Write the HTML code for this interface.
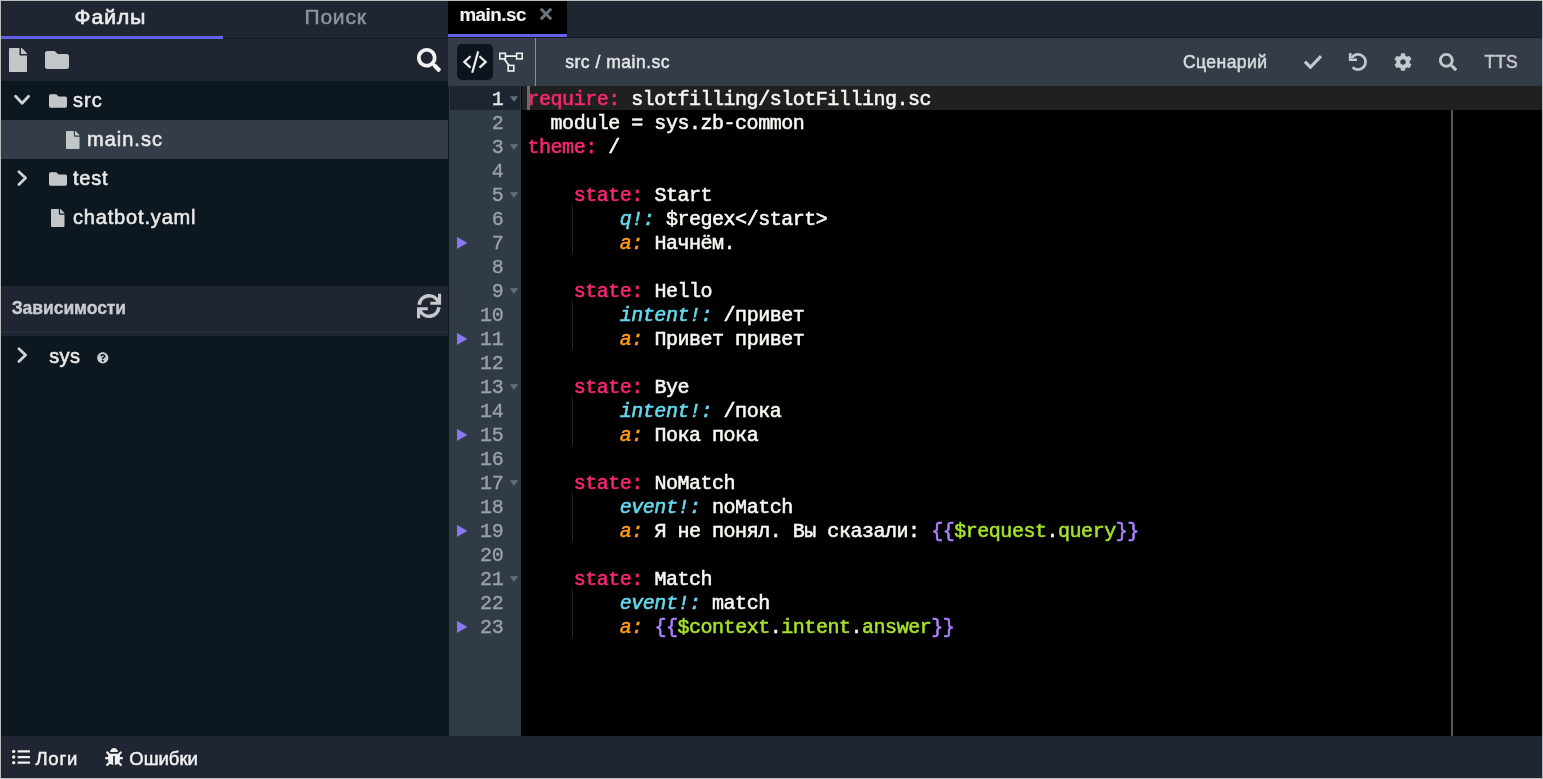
<!DOCTYPE html>
<html lang="ru">
<head>
<meta charset="utf-8">
<title>main.sc</title>
<style>
*{box-sizing:border-box;margin:0;padding:0}
html,body{width:1543px;height:779px;overflow:hidden;background:#bcbcbc}
body{font-family:"Liberation Sans",sans-serif;color:#e9e9e9;position:relative}
.abs{position:absolute}
.t{position:absolute;white-space:nowrap;line-height:1;-webkit-text-stroke:0.3px}
svg{position:absolute;overflow:visible}
/* sidebar */
#side{left:1px;top:1px;width:447px;height:735px;background:#0d1720}
#stabs{left:1px;top:1px;width:447px;height:38px;background:#1f2632}
#stabline{left:223px;top:37.5px;width:225px;height:1.5px;background:#141b24}
#sactive{left:1px;top:36px;width:222px;height:3px;background:#6461e9}
#stool{left:1px;top:39px;width:447px;height:42px;background:#1f2632}
#selrow{left:1px;top:120px;width:447px;height:39px;background:#333c47}
#deph{left:1px;top:286px;width:447px;height:50px;background:#1f2632}
#deps{left:1px;top:331px;width:447px;height:2px;background:linear-gradient(#27333b,#222c36)}
#divider{left:448px;top:86px;width:1px;height:650px;background:#0d1720}
/* editor */
#etabs{left:448px;top:1px;width:1094px;height:37px;background:#1f2632}
#etabline{left:448px;top:37px;width:1094px;height:1px;background:#151c25}
#etab{left:448px;top:1px;width:119px;height:33px;background:#000}
#etabul{left:448px;top:34px;width:119px;height:3px;background:#6461e9}
#etool{left:448px;top:38px;width:1094px;height:48px;background:#333c47}
#btncode{left:457px;top:44px;width:36px;height:36px;border-radius:5px;background:#0c151e}
#vsep{left:535px;top:38px;width:1px;height:48px;background:#8a9097}
#gutter{left:448.8px;top:86px;width:72.6px;height:650px;background:#313b46}
#gact{left:450px;top:86px;width:70px;height:24px;background:#1d2530}
#code{left:521px;top:86px;width:1021px;height:650px;background:#000}
#lact{left:522px;top:86px;width:1020px;height:24px;background:#202020}
#cursor{left:527px;top:86px;width:2.6px;height:24px;background:#6a6a6a}
#pm{left:1451px;top:110px;width:2px;height:626px;background:#555651}
#bottom{left:1px;top:736px;width:1541px;height:42px;background:#1f2632}
/* code text */
.ln,.cl{position:absolute;font-family:"Liberation Mono",monospace;font-size:20px;letter-spacing:-0.47px;line-height:24px;height:24px;white-space:pre;margin-top:2px;-webkit-text-stroke:0.55px}
.ln{left:450px;width:53.2px;text-align:right;color:#9ba0a7;-webkit-text-stroke:0.35px}
.cl{left:527.5px;color:#f8f8f2}
.k{color:#f92672}.c{color:#66d9ef;font-style:italic}.o{color:#fd971f;font-style:italic}
.p{color:#ae81ff}.g{color:#a6e22e}
.ig{position:absolute;width:1px;background-image:linear-gradient(#45443a 50%,transparent 50%);background-size:1px 2px}
</style>
</head>
<body>
<div id="wrap" style="position:absolute;left:0;top:0;width:1543px;height:779px;will-change:transform">
<!-- SIDEBAR -->
<div class="abs" id="side"></div>
<div class="abs" id="stabs"></div>
<div class="abs" id="stabline"></div>
<div class="abs" id="sactive"></div>
<div class="abs" id="stool"></div>
<div class="abs" id="selrow"></div>
<div class="abs" id="deph"></div>
<div class="abs" id="deps"></div>
<!-- EDITOR -->
<div class="abs" id="etabs"></div>
<div class="abs" id="etabline"></div>
<div class="abs" id="etab"></div>
<div class="abs" id="etabul"></div>
<div class="abs" id="etool"></div>
<div class="abs" id="divider"></div>
<div class="abs" id="btncode"></div>
<div class="abs" id="vsep"></div>
<div class="abs" id="gutter"></div>
<div class="abs" id="gact"></div>
<div class="abs" id="code"></div>
<div class="abs" id="lact"></div>
<div class="abs" id="pm"></div>
<div class="abs" id="cursor"></div>
<div class="abs" id="bottom"></div>
<!--TEXT-->
<div class="t" id="t1" style="left:74.5px;top:6px;font-size:21px;letter-spacing:1px;color:#ececec;-webkit-text-stroke:0.65px">Файлы</div>
<div class="t" id="t2" style="left:304.5px;top:6px;font-size:21px;letter-spacing:0.8px;color:#8f949b;-webkit-text-stroke:0.5px">Поиск</div>
<div class="t" id="t3" style="left:73px;top:90px;font-size:20px;letter-spacing:1px;-webkit-text-stroke:0.55px">src</div>
<div class="t" id="t4" style="left:87px;top:129px;font-size:20px;letter-spacing:1px;-webkit-text-stroke:0.55px">main.sc</div>
<div class="t" id="t5" style="left:73px;top:168px;font-size:20px;letter-spacing:0.8px;-webkit-text-stroke:0.55px">test</div>
<div class="t" id="t6" style="left:73px;top:207px;font-size:20px;letter-spacing:0.83px;-webkit-text-stroke:0.55px">chatbot.yaml</div>
<div class="t" id="t7" style="left:11.7px;top:300px;font-size:17.5px;font-weight:bold;letter-spacing:-0.05px;color:#c9ccd0;-webkit-text-stroke:0.35px">Зависимости</div>
<div class="t" id="t8" style="left:49.3px;top:346px;font-size:20px;letter-spacing:0.3px;-webkit-text-stroke:0.55px">sys</div>
<div class="t" id="t9" style="left:459.4px;top:6px;font-size:18.75px;font-weight:bold;letter-spacing:-0.45px;color:#f2f2f2;-webkit-text-stroke:0.1px">main.sc</div>
<div class="t" id="t10" style="left:565.3px;top:54px;font-size:17.5px;letter-spacing:0.5px;color:#e4e5e7;-webkit-text-stroke:0.5px">src / main.sc</div>
<div class="t" id="t11" style="left:1183px;top:54px;font-size:17.5px;letter-spacing:0.45px;color:#d9dbde;-webkit-text-stroke:0.5px">Сценарий</div>
<div class="t" id="t12" style="left:1484.5px;top:53.5px;font-size:17.5px;color:#c6c9cd;-webkit-text-stroke:0.5px">TTS</div>
<div class="t" id="t13" style="left:35.4px;top:750px;font-size:18.5px;letter-spacing:0.8px;color:#f0f0f0;-webkit-text-stroke:0.5px">Логи</div>
<div class="t" id="t14" style="left:129.3px;top:750px;font-size:18.5px;color:#f0f0f0;-webkit-text-stroke:0.5px">Ошибки</div>
<!--ICONS-->
<svg id="i1" style="left:9px;top:48px" width="18" height="24" viewBox="0 0 384 512"><path d="M224 136V0H24C10.7 0 0 10.7 0 24v464c0 13.3 10.7 24 24 24h336c13.3 0 24-10.7 24-24V160H248c-13.2 0-24-10.8-24-24zm160-14.1v6.1H256V0h6.1c6.4 0 12.5 2.5 17 7l97.9 98c4.5 4.5 7 10.6 7 16.9z" fill="#c3c6c9"/></svg>
<svg id="i2" style="left:45px;top:48px" width="24" height="24" viewBox="0 0 512 512"><path d="M464 128H272l-64-64H48C21.49 64 0 85.49 0 112v288c0 26.51 21.49 48 48 48h416c26.51 0 48-21.49 48-48V176c0-26.51-21.49-48-48-48z" fill="#c3c6c9"/></svg>
<svg id="i3" style="left:417px;top:48px" width="24" height="24" viewBox="0 0 512 512"><path d="M505 442.7L405.3 343c-4.5-4.5-10.6-7-17-7H372c27.6-35.3 44-79.7 44-128C416 93.1 322.9 0 208 0S0 93.1 0 208s93.1 208 208 208c48.3 0 92.7-16.4 128-44v16.3c0 6.4 2.5 12.5 7 17l99.700 99.700c9.400 9.400 24.600 9.400 33.900 0l28.300-28.300c9.400-9.400 9.400-24.600.1-34zM208 336c-70.7 0-128-57.2-128-128 0-70.7 57.200-128 128-128 70.700 0 128 57.200 128 128 0 70.700-57.200 128-128 128z" fill="#f2f2f2"/></svg>
<svg id="i4" style="left:12px;top:90px" width="20" height="20" viewBox="0 0 20 20"><polyline points="3.6,6.3 10.1,13.3 16.6,6.3" fill="none" stroke="#cfd1d4" stroke-width="2.8" stroke-linecap="round" stroke-linejoin="round"/></svg>
<svg id="i5" style="left:49px;top:92px" width="18" height="18" viewBox="0 0 512 512"><path d="M464 128H272l-64-64H48C21.49 64 0 85.49 0 112v288c0 26.51 21.49 48 48 48h416c26.51 0 48-21.49 48-48V176c0-26.51-21.49-48-48-48z" fill="#c3c6c9"/></svg>
<svg id="i6" style="left:65.8px;top:131px" width="13.5" height="18" viewBox="0 0 384 512"><path d="M224 136V0H24C10.7 0 0 10.7 0 24v464c0 13.3 10.7 24 24 24h336c13.3 0 24-10.7 24-24V160H248c-13.2 0-24-10.8-24-24zm160-14.1v6.1H256V0h6.1c6.4 0 12.5 2.5 17 7l97.9 98c4.5 4.5 7 10.6 7 16.9z" fill="#c3c6c9"/></svg>
<svg id="i7" style="left:12px;top:168px" width="20" height="20" viewBox="0 0 20 20"><polyline points="6.9,3.8 13.6,10.1 6.9,16.4" fill="none" stroke="#cfd1d4" stroke-width="2.8" stroke-linecap="round" stroke-linejoin="round"/></svg>
<svg id="i8" style="left:49px;top:170px" width="18" height="18" viewBox="0 0 512 512"><path d="M464 128H272l-64-64H48C21.49 64 0 85.49 0 112v288c0 26.51 21.49 48 48 48h416c26.51 0 48-21.49 48-48V176c0-26.51-21.49-48-48-48z" fill="#c3c6c9"/></svg>
<svg id="i9" style="left:51.2px;top:209px" width="13.5" height="18" viewBox="0 0 384 512"><path d="M224 136V0H24C10.7 0 0 10.7 0 24v464c0 13.3 10.7 24 24 24h336c13.3 0 24-10.7 24-24V160H248c-13.2 0-24-10.8-24-24zm160-14.1v6.1H256V0h6.1c6.4 0 12.5 2.5 17 7l97.9 98c4.5 4.5 7 10.6 7 16.9z" fill="#c3c6c9"/></svg>
<svg id="i10" style="left:412px;top:290px" width="34" height="32" viewBox="412 290 34 32"><g fill="none" stroke="#c5c8cc"><path d="M419.2 304.7A9.9 9.9 0 0 1 438.2 301.9" stroke-width="3.6"/><path d="M438.9 307.3A9.9 9.9 0 0 1 419.9 310.1" stroke-width="3.6"/><path d="M439.55 293.7V303.2H430.3" stroke-width="3.1"/><path d="M418.55 318.3V308.8H427.8" stroke-width="3.1"/></g></svg>
<svg id="i11" style="left:12px;top:345px" width="20" height="20" viewBox="0 0 20 20"><polyline points="6.9,3.8 13.6,10.1 6.9,16.4" fill="none" stroke="#cfd1d4" stroke-width="2.8" stroke-linecap="round" stroke-linejoin="round"/></svg>
<svg id="i12" style="left:96.6px;top:351.9px" width="11.6" height="11.6" viewBox="0 0 512 512"><path d="M504 256c0 136.997-111.043 248-248 248S8 392.997 8 256C8 119.083 119.043 8 256 8s248 111.083 248 248zM262.655 90c-54.497 0-89.255 22.957-116.549 63.758-3.536 5.286-2.353 12.415 2.715 16.258l34.699 26.31c5.205 3.947 12.621 3.008 16.665-2.122 17.864-22.658 30.113-35.797 57.303-35.797 20.429 0 45.698 13.148 45.698 32.958 0 14.976-12.363 22.667-32.534 33.976C247.128 238.528 216 254.941 216 296v4c0 6.627 5.373 12 12 12h56c6.627 0 12-5.373 12-12v-1.333c0-28.462 83.186-29.647 83.186-106.667 0-58.002-60.165-102-116.531-102zM256 338c-25.365 0-46 20.635-46 46 0 25.364 20.635 46 46 46s46-20.636 46-46c0-25.365-20.635-46-46-46z" fill="#c9ccd0"/></svg>
<svg id="i13" style="left:540px;top:8px" width="12" height="12" viewBox="0 0 12 12"><path d="M0.8 0.8L11.2 11.2M11.2 0.8L0.8 11.2" fill="none" stroke="#6c7581" stroke-width="3"/></svg>
<svg id="i14" style="left:457px;top:44px" width="36" height="36" viewBox="0 0 36 36"><g fill="none" stroke="#f0f0f0" stroke-width="2.2"><polyline points="13.5,12.3 7.3,17.9 13.5,23.6"/><polyline points="22.5,12.3 28.7,17.9 22.5,23.6"/><line x1="21.2" y1="7.4" x2="15.2" y2="28.8"/></g></svg>
<svg id="i15" style="left:496px;top:44px" width="30" height="36" viewBox="0 0 30 36"><g fill="none" stroke="#f0f0f0" stroke-width="1.6"><rect x="3.8" y="9.3" width="5.6" height="5.6"/><rect x="20.6" y="9.3" width="5.6" height="5.6"/><rect x="12.2" y="21.4" width="5.6" height="5.6"/><line x1="9.4" y1="12.1" x2="20.6" y2="12.1" stroke-width="1.8"/><line x1="8.3" y1="14.9" x2="13" y2="21.6" stroke-width="1.8"/></g></svg>
<svg id="i16" style="left:1300px;top:50px" width="26" height="24" viewBox="0 0 26 24"><polyline points="4.9,11.7 10.4,17.2 21,6.1" fill="none" stroke="#c5c8cc" stroke-width="3.1"/></svg>
<svg id="i17" style="left:1346px;top:50px" width="24" height="24" viewBox="1346 50 24 24"><path d="M1351.7 57.7A7.6 7.6 0 1 1 1352.6 67.3" fill="none" stroke="#c5c8cc" stroke-width="2.7"/><path d="M1350.2 52.9V59.75H1357" fill="none" stroke="#c5c8cc" stroke-width="2.7"/></svg>
<svg id="i18" style="left:1394px;top:53px" width="18" height="18" viewBox="0 0 512 512"><path d="M487.4 315.7l-42.6-24.6c4.3-23.2 4.3-47 0-70.2l42.6-24.6c4.9-2.8 7.1-8.6 5.5-14-11.1-35.6-30-67.8-54.7-94.6-3.8-4.1-10-5.1-14.8-2.3L380.8 110c-17.9-15.4-38.5-27.3-60.8-35.1V25.8c0-5.6-3.9-10.5-9.4-11.7-36.700-8.200-74.300-7.800-109.200 0-5.500 1.200-9.400 6.100-9.400 11.700V75c-22.200 7.900-42.800 19.800-60.800 35.100L88.700 85.500c-4.900-2.800-11-1.900-14.800 2.300-24.700 26.700-43.600 58.900-54.700 94.600-1.700 5.400.6 11.200 5.500 14L67.300 221c-4.300 23.200-4.300 47 0 70.200l-42.600 24.600c-4.900 2.800-7.100 8.600-5.500 14 11.100 35.600 30 67.800 54.700 94.600 3.800 4.100 10 5.100 14.800 2.300l42.600-24.600c17.900 15.400 38.500 27.300 60.800 35.100v49.200c0 5.600 3.900 10.500 9.400 11.700 36.700 8.200 74.300 7.800 109.200 0 5.500-1.200 9.400-6.100 9.400-11.700v-49.200c22.200-7.900 42.800-19.800 60.800-35.100l42.600 24.600c4.900 2.800 11 1.900 14.800-2.300 24.700-26.700 43.600-58.900 54.700-94.600 1.500-5.500-.7-11.300-5.600-14.100zM256 336c-44.100 0-80-35.900-80-80s35.900-80 80-80 80 35.900 80 80-35.900 80-80 80z" fill="#c5c8cc"/></svg>
<svg id="i19" style="left:1439px;top:53px" width="18" height="18" viewBox="0 0 512 512"><path d="M505 442.7L405.3 343c-4.5-4.5-10.6-7-17-7H372c27.6-35.3 44-79.7 44-128C416 93.1 322.9 0 208 0S0 93.1 0 208s93.1 208 208 208c48.3 0 92.7-16.4 128-44v16.3c0 6.4 2.5 12.5 7 17l99.700 99.700c9.400 9.400 24.600 9.400 33.900 0l28.300-28.300c9.400-9.400 9.400-24.600.1-34zM208 336c-70.7 0-128-57.2-128-128 0-70.7 57.200-128 128-128 70.700 0 128 57.200 128 128 0 70.700-57.200 128-128 128z" fill="#c5c8cc"/></svg>
<svg id="i20" style="left:12px;top:748px" width="18" height="18" viewBox="0 0 512 512"><g fill="#f0f0f0"><circle cx="48" cy="96" r="48"/><circle cx="48" cy="256" r="48"/><circle cx="48" cy="416" r="48"/><rect x="160" y="64" width="352" height="64" rx="16"/><rect x="160" y="224" width="352" height="64" rx="16"/><rect x="160" y="384" width="352" height="64" rx="16"/></g></svg>
<svg id="i21" style="left:105px;top:748px" width="18" height="18" viewBox="0 0 512 512"><path d="M511.988 288.9c-.478 17.43-15.217 31.1-32.653 31.1H424v16c0 21.864-4.882 42.584-13.6 61.145l60.228 60.228c12.496 12.497 12.496 32.758 0 45.255-12.498 12.497-32.759 12.496-45.256 0l-54.736-54.736C345.886 467.965 314.351 480 280 480V236c0-6.627-5.373-12-12-12h-24c-6.627 0-12 5.373-12 12v244c-34.351 0-65.886-12.035-90.636-32.108l-54.736 54.736c-12.498 12.497-32.759 12.496-45.256 0-12.496-12.497-12.496-32.758 0-45.255l60.228-60.228C92.882 378.584 88 357.864 88 336v-16H32.666C15.23 320 .491 306.33.013 288.9-.484 270.816 14.028 256 32 256h56v-58.745l-46.628-46.628c-12.496-12.497-12.496-32.758 0-45.255 12.498-12.497 32.758-12.497 45.256 0L141.255 160h229.489l54.627-54.627c12.498-12.497 32.758-12.497 45.256 0 12.496 12.497 12.496 32.758 0 45.255L424 197.255V256h56c17.972 0 32.484 14.816 31.988 32.9zM257 0c-61.856 0-112 50.144-112 112h224C369 50.144 318.856 0 257 0z" fill="#f0f0f0"/></svg>
<!--CODE-->
<div class="ln" id="n1" style="top:86px;color:#e6e6e6">1</div><div class="cl" id="c1" style="top:86px"><span class="k">require:</span> slotfilling/slotFilling.sc</div>
<div class="ln" id="n2" style="top:110px">2</div><div class="cl" id="c2" style="top:110px">  module = sys.zb-common</div>
<div class="ln" id="n3" style="top:134px">3</div><div class="cl" id="c3" style="top:134px"><span class="k">theme:</span> /</div>
<div class="ln" id="n4" style="top:158px">4</div>
<div class="ln" id="n5" style="top:182px">5</div><div class="cl" id="c5" style="top:182px">    <span class="k">state:</span> Start</div>
<div class="ln" id="n6" style="top:206px">6</div><div class="cl" id="c6" style="top:206px">        <span class="c">q!:</span> $regex&lt;/start&gt;</div>
<div class="ln" id="n7" style="top:230px">7</div><div class="cl" id="c7" style="top:230px">        <span class="o">a:</span> Начнём.</div>
<div class="ln" id="n8" style="top:254px">8</div>
<div class="ln" id="n9" style="top:278px">9</div><div class="cl" id="c9" style="top:278px">    <span class="k">state:</span> Hello</div>
<div class="ln" id="n10" style="top:302px">10</div><div class="cl" id="c10" style="top:302px">        <span class="c">intent!:</span> /привет</div>
<div class="ln" id="n11" style="top:326px">11</div><div class="cl" id="c11" style="top:326px">        <span class="o">a:</span> Привет привет</div>
<div class="ln" id="n12" style="top:350px">12</div>
<div class="ln" id="n13" style="top:374px">13</div><div class="cl" id="c13" style="top:374px">    <span class="k">state:</span> Bye</div>
<div class="ln" id="n14" style="top:398px">14</div><div class="cl" id="c14" style="top:398px">        <span class="c">intent!:</span> /пока</div>
<div class="ln" id="n15" style="top:422px">15</div><div class="cl" id="c15" style="top:422px">        <span class="o">a:</span> Пока пока</div>
<div class="ln" id="n16" style="top:446px">16</div>
<div class="ln" id="n17" style="top:470px">17</div><div class="cl" id="c17" style="top:470px">    <span class="k">state:</span> NoMatch</div>
<div class="ln" id="n18" style="top:494px">18</div><div class="cl" id="c18" style="top:494px">        <span class="c">event!:</span> noMatch</div>
<div class="ln" id="n19" style="top:518px">19</div><div class="cl" id="c19" style="top:518px">        <span class="o">a:</span> Я не понял. Вы сказали: <span class="p">{{</span><span class="g">$request</span>.<span class="g">query</span><span class="p">}}</span></div>
<div class="ln" id="n20" style="top:542px">20</div>
<div class="ln" id="n21" style="top:566px">21</div><div class="cl" id="c21" style="top:566px">    <span class="k">state:</span> Match</div>
<div class="ln" id="n22" style="top:590px">22</div><div class="cl" id="c22" style="top:590px">        <span class="c">event!:</span> match</div>
<div class="ln" id="n23" style="top:614px">23</div><div class="cl" id="c23" style="top:614px">        <span class="o">a:</span> <span class="p">{{</span><span class="g">$context</span>.<span class="g">intent</span>.<span class="g">answer</span><span class="p">}}</span></div>
<svg style="left:509px;top:86px" width="10" height="24" viewBox="0 0 10 24"><path d="M0.9 10.3H9.1L5 15.7Z" fill="#66707b"/></svg>
<svg style="left:509px;top:134px" width="10" height="24" viewBox="0 0 10 24"><path d="M0.9 10.3H9.1L5 15.7Z" fill="#66707b"/></svg>
<svg style="left:509px;top:182px" width="10" height="24" viewBox="0 0 10 24"><path d="M0.9 10.3H9.1L5 15.7Z" fill="#66707b"/></svg>
<svg style="left:509px;top:278px" width="10" height="24" viewBox="0 0 10 24"><path d="M0.9 10.3H9.1L5 15.7Z" fill="#66707b"/></svg>
<svg style="left:509px;top:374px" width="10" height="24" viewBox="0 0 10 24"><path d="M0.9 10.3H9.1L5 15.7Z" fill="#66707b"/></svg>
<svg style="left:509px;top:470px" width="10" height="24" viewBox="0 0 10 24"><path d="M0.9 10.3H9.1L5 15.7Z" fill="#66707b"/></svg>
<svg style="left:509px;top:566px" width="10" height="24" viewBox="0 0 10 24"><path d="M0.9 10.3H9.1L5 15.7Z" fill="#66707b"/></svg>
<svg style="left:456px;top:230px" width="12" height="24" viewBox="0 0 12 24"><path d="M1 6.8L11.3 13L1 19.1Z" fill="#8b78ee"/></svg>
<svg style="left:456px;top:326px" width="12" height="24" viewBox="0 0 12 24"><path d="M1 6.8L11.3 13L1 19.1Z" fill="#8b78ee"/></svg>
<svg style="left:456px;top:422px" width="12" height="24" viewBox="0 0 12 24"><path d="M1 6.8L11.3 13L1 19.1Z" fill="#8b78ee"/></svg>
<svg style="left:456px;top:518px" width="12" height="24" viewBox="0 0 12 24"><path d="M1 6.8L11.3 13L1 19.1Z" fill="#8b78ee"/></svg>
<svg style="left:456px;top:614px" width="12" height="24" viewBox="0 0 12 24"><path d="M1 6.8L11.3 13L1 19.1Z" fill="#8b78ee"/></svg>
<div class="ig" style="left:572px;top:206px;height:48px"></div>
<div class="ig" style="left:572px;top:302px;height:48px"></div>
<div class="ig" style="left:572px;top:398px;height:48px"></div>
<div class="ig" style="left:572px;top:494px;height:48px"></div>
<div class="ig" style="left:572px;top:590px;height:48px"></div>
</div>
</body>
</html>
